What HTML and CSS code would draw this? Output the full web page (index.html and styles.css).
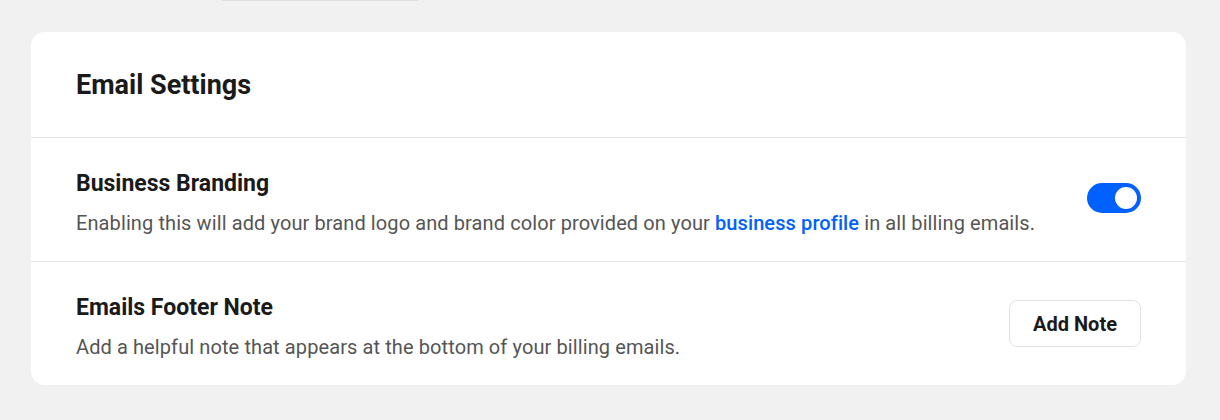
FILE: index.html
```html
<!DOCTYPE html>
<html lang="en">
<head>
<meta charset="utf-8">
<title>Email Settings</title>
<link rel="stylesheet" href="styles.css">
</head>
<body>
<div class="page">
  <div class="top-edge"></div>
  <section class="card">
    <header class="card-header">
      <h2 class="card-title">Email Settings</h2>
    </header>
    <div class="setting-row">
      <div class="setting-text">
        <h3 class="setting-title">Business Branding</h3>
        <p class="setting-desc">Enabling this will add your brand logo and brand color provided on your <a class="link" href="#">business profile</a> in all billing emails.</p>
      </div>
      <button class="toggle is-on" type="button" aria-pressed="true"><span class="knob"></span></button>
    </div>
    <div class="setting-row">
      <div class="setting-text">
        <h3 class="setting-title">Emails Footer Note</h3>
        <p class="setting-desc">Add a helpful note that appears at the bottom of your billing emails.</p>
      </div>
      <button class="btn" type="button">Add Note</button>
    </div>
  </section>
</div>
</body>
</html>
```

FILE: styles.css
```css
* { box-sizing: border-box; }
html, body {
  margin: 0;
  padding: 0;
  background: #f1f1f1;
  font-family: Roboto, "Liberation Sans", Arial, sans-serif;
}
.page {
  width: 1220px;
  height: 420px;
  padding: 0 34px 0 31px;
}
.top-edge {
  width: 196px;
  height: 1px;
  margin-left: 191px;
  background: #dedede;
}
.card {
  margin-top: 31px;
  background: #ffffff;
  border-radius: 14px;
  overflow: hidden;
}
.card-header {
  padding: 35px 45px 34px;
  border-bottom: 1px solid #e4e4e4;
}
.card-title {
  margin: 0;
  font-size: 27px;
  line-height: 36px;
  font-weight: 700;
  color: #1a1a1a;
}
.setting-row {
  display: flex;
  align-items: center;
  justify-content: space-between;
  gap: 24px;
  padding: 31px 45px 23px;
}
.setting-row + .setting-row {
  border-top: 1px solid #e4e4e4;
}
.setting-title {
  margin: 0 0 9px;
  font-size: 23px;
  line-height: 30px;
  font-weight: 700;
  color: #1a1a1a;
}
.setting-desc {
  margin: 0;
  font-size: 20px;
  line-height: 30px;
  letter-spacing: 0.1px;
  color: #555555;
}
.link {
  color: #0061fe;
  font-weight: 500;
  text-decoration: none;
}
.toggle {
  flex: none;
  position: relative;
  width: 54px;
  height: 30px;
  margin-top: -12px;
  padding: 0;
  border: none;
  border-radius: 15px;
  background: #0061fe;
  cursor: pointer;
}
.knob {
  position: absolute;
  top: 4px;
  right: 4px;
  width: 22px;
  height: 22px;
  border-radius: 50%;
  background: #ffffff;
}
.btn {
  flex: none;
  width: 132px;
  height: 47px;
  margin-top: -8px;
  border: 1px solid #e2e2e2;
  border-radius: 8px;
  background: #ffffff;
  font-family: inherit;
  font-size: 20px;
  font-weight: 700;
  color: #1a1a1a;
  cursor: pointer;
}
```
